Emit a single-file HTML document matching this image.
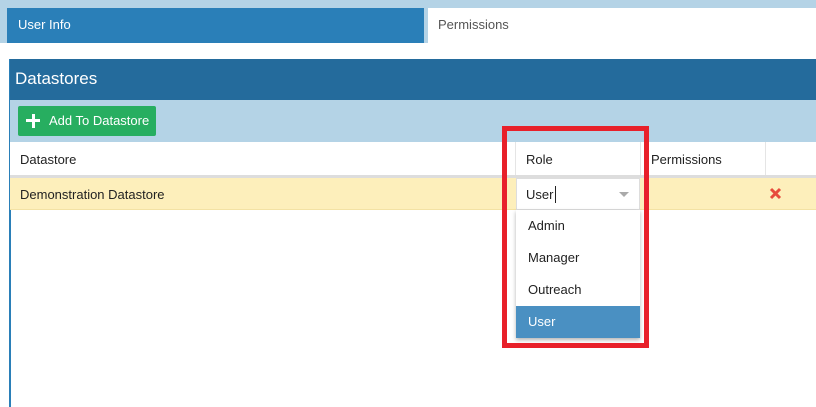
<!DOCTYPE html>
<html><head><style>
*{margin:0;padding:0;box-sizing:border-box}
body{width:816px;height:407px;position:relative;overflow:hidden;background:#fff;font-family:"Liberation Sans",sans-serif;font-size:13px;color:#222}
div{position:absolute}
.t{white-space:nowrap}
</style></head><body>
<div style="left:0;top:0;width:816px;height:43px;background:#b4d3e6"></div>
<div style="left:7px;top:8px;width:417px;height:35px;background:#2a7fb8"></div>
<div class="t" style="left:18px;top:17px;color:#fff;font-size:13px">User Info</div>
<div style="left:428px;top:8px;width:388px;height:35px;background:#fff"></div>
<div class="t" style="left:438px;top:17px;color:#555;font-size:13px">Permissions</div>

<div style="left:9px;top:59px;width:2px;height:348px;background:#2a7fb8"></div>
<div style="left:10px;top:59px;width:806px;height:41px;background:#246b9c"></div>
<div class="t" style="left:15px;top:69px;color:#fff;font-size:17px">Datastores</div>
<div style="left:10px;top:100px;width:806px;height:42px;background:#b4d3e6"></div>
<div style="left:18px;top:106px;width:138px;height:30px;background:#27ae60;border-radius:2px"></div>
<div style="left:26px;top:119px;width:14px;height:3px;background:#fff"></div>
<div style="left:31.5px;top:113.5px;width:3px;height:14px;background:#fff"></div>
<div class="t" style="left:49px;top:113px;color:#fff;font-size:13px">Add To Datastore</div>

<div style="left:10px;top:142px;width:806px;height:33px;background:#fff"></div>
<div style="left:515px;top:142px;width:1px;height:33px;background:#e5e5e5"></div>
<div style="left:640px;top:142px;width:1px;height:33px;background:#e5e5e5"></div>
<div style="left:765px;top:142px;width:1px;height:33px;background:#e5e5e5"></div>
<div class="t" style="left:20px;top:152px;font-size:13px">Datastore</div>
<div class="t" style="left:526px;top:152px;font-size:13px">Role</div>
<div class="t" style="left:651px;top:152px;font-size:13px">Permissions</div>
<div style="left:10px;top:175px;width:806px;height:3px;background:#ddd"></div>
<div style="left:10px;top:178px;width:806px;height:32px;background:#fdefbb;border-bottom:1px solid #f3e2a4"></div>
<div class="t" style="left:20px;top:187px;font-size:13px">Demonstration Datastore</div>
<svg style="position:absolute;left:769px;top:187px" width="13" height="13"><path d="M2 2L11 11M11 2L2 11" stroke="#e74c3c" stroke-width="3"/></svg>

<div style="left:516px;top:178px;width:124px;height:32px;background:#fff;border:1px solid #ddd"></div>
<div class="t" style="left:526px;top:187px;font-size:13px">User</div>
<div style="left:555px;top:186px;width:1px;height:17px;background:#222"></div>
<div style="left:619px;top:192px;width:0;height:0;border-left:5px solid transparent;border-right:5px solid transparent;border-top:5px solid #aaa"></div>
<div style="left:516px;top:210px;width:124px;height:128px;background:#fff;box-shadow:0 2px 4px rgba(0,0,0,.3)"></div>
<div class="t" style="left:528px;top:218px">Admin</div>
<div class="t" style="left:528px;top:250px">Manager</div>
<div class="t" style="left:528px;top:282px">Outreach</div>
<div style="left:516px;top:306px;width:124px;height:32px;background:#4a90c2"></div>
<div class="t" style="left:528px;top:314px;color:#fff">User</div>

<div style="left:502px;top:126px;width:147px;height:222px;border:5px solid #e8202a"></div>
</body></html>
